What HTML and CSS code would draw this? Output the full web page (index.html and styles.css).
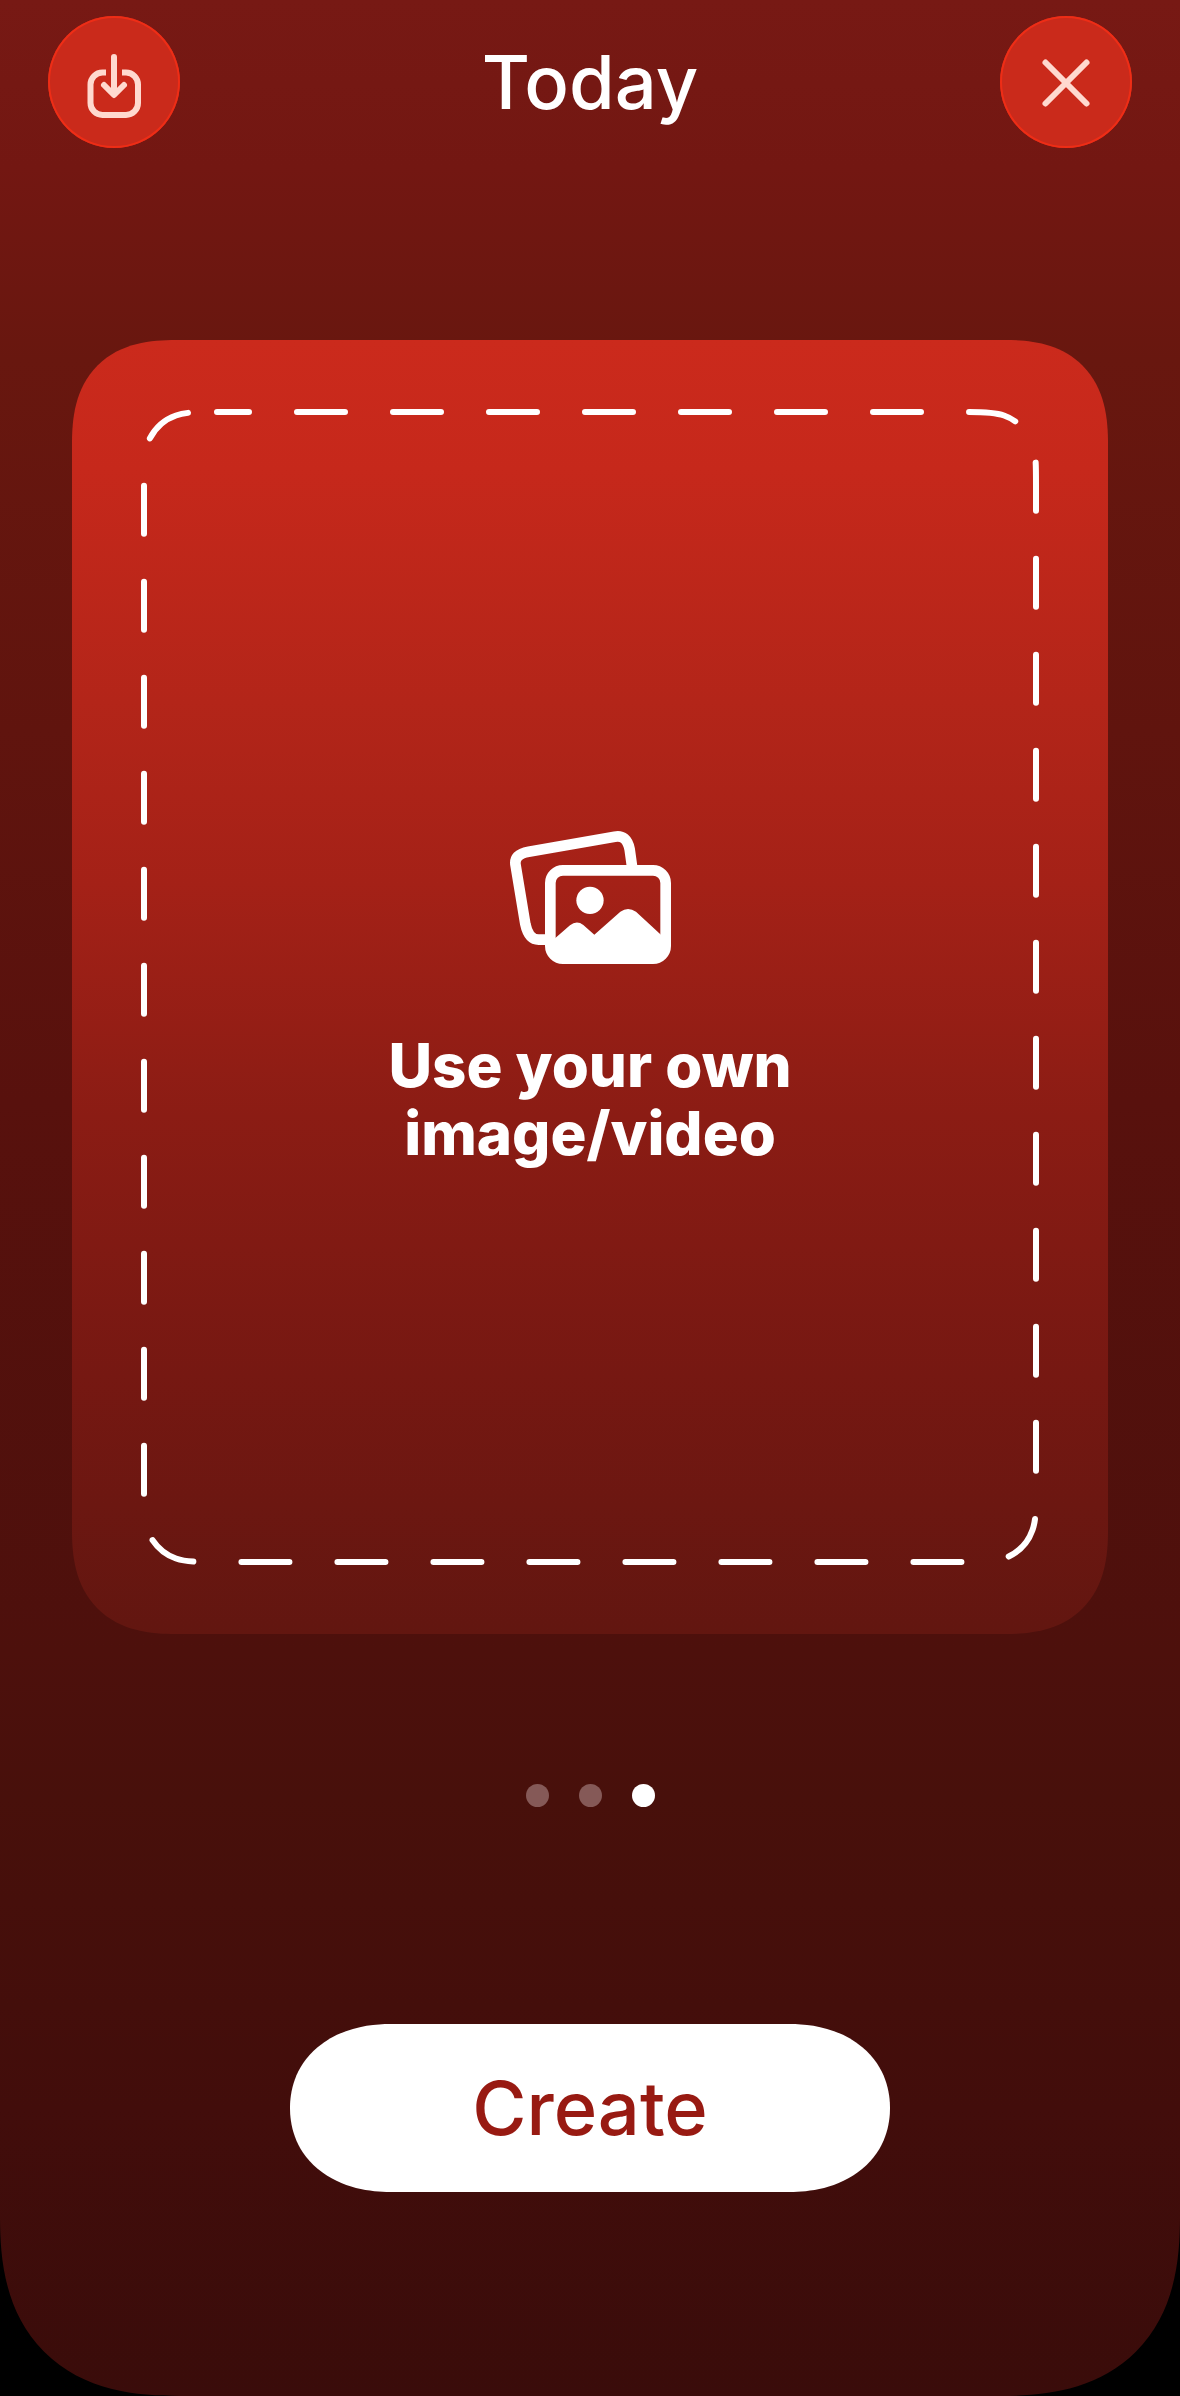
FILE: index.html
```html
<!DOCTYPE html>
<html lang="en">
<head>
    <meta charset="UTF-8">
    <meta name="viewport" content="width=device-width, initial-scale=1.0">
    <title>Today</title>
    <link rel="stylesheet" href="styles.css">
</head>
<body>
    <div class="screen">
        <header class="top-bar">
            <button type="button" class="round-btn" aria-label="Save">
                <svg viewBox="0 0 132 132" aria-hidden="true">
                    <path d="M58 56.5H54.5a12 12 0 0 0-12 12V87a12 12 0 0 0 12 12H78a12 12 0 0 0 12-12V68.5a12 12 0 0 0-12-12H74" stroke-linecap="butt"/>
                    <path d="M66 41V78M56 69L66 79L76 69"/>
                </svg>
            </button>
            <h1>Today</h1>
            <button type="button" class="round-btn" aria-label="Close">
                <svg viewBox="0 0 132 132" aria-hidden="true">
                    <path d="M45.5 46.5L86.5 87.5M86.5 46.5L45.5 87.5"/>
                </svg>
            </button>
        </header>

        <main>
            <button type="button" class="card">
                <svg class="dashes" viewBox="0 0 1036 1294" aria-hidden="true">
                    <path d="M145 72H891C911 72 922 72 932 75.5C945 80 956 91 960.5 104C964 114 964 125 964 145V1149C964 1169 964 1180 960.5 1190C956 1203 945 1214 932 1218.5C922 1222 911 1222 891 1222H145C125 1222 114 1222 104 1218.5C91 1214 80 1203 75.5 1190C72 1180 72 1169 72 1149V145C72 125 72 114 75.5 104C80 91 91 80 104 75.5C114 72 125 72 145 72"/>
                </svg>
                <svg class="photos" viewBox="0 0 483 399" aria-hidden="true">
                    <path class="line" d="M366 106L359 55Q350 10 314 17L56 62Q10 70 17 104L46 279Q56 326 86 326H108"/>
                    <rect class="line" x="121" y="118" width="346" height="265" rx="38"/>
                    <circle cx="240" cy="208" r="41"/>
                    <path d="M130 326L180 283Q200 267 220 282L253 311L331 242Q354 226 378 242L460 318V375L440 383H130Z"/>
                </svg>
                <span class="card-text">Use your own<br>image/video</span>
            </button>

            <nav class="dots" aria-label="Slides">
                <button type="button" aria-label="Slide 1"></button>
                <button type="button" aria-label="Slide 2"></button>
                <button type="button" class="active" aria-label="Slide 3"></button>
            </nav>

            <button type="button" class="create-btn">Create</button>
        </main>
    </div>
</body>
</html>
```

FILE: styles.css
```css
* {
    margin: 0;
    padding: 0;
    box-sizing: border-box;
}

body {
    background-color: #000;
    color: white;
    font-family: Inter, 'Liberation Sans', sans-serif;
}

button {
    border: none;
    background: none;
    color: inherit;
    font-family: inherit;
    cursor: pointer;
}

.screen {
    min-height: 100vh;
    padding-bottom: 204px;
    background: linear-gradient(#771914 0%, #731712 7%, #68170f 15%, #58110d 46%, #4d100c 69%, #48100b 75%, #420d0b 88%, #3a0c0a 100%);
    border-radius: 0 0 148px 148px;
}

.top-bar {
    display: flex;
    justify-content: space-between;
    align-items: center;
    padding: 16px 48px 0;
}

h1 {
    font-size: 74px;
    font-weight: 500;
    line-height: 80px;
}

.round-btn {
    width: 132px;
    height: 132px;
    border-radius: 50%;
    background-color: #ca2a1b;
    box-shadow: inset 0 0 0 2px #ee2d16;
}

.round-btn svg {
    display: block;
    fill: none;
    stroke: #ffd9cf;
    stroke-width: 6;
    stroke-linecap: round;
    stroke-linejoin: round;
}

main {
    display: flex;
    flex-direction: column;
    align-items: center;
    padding: 192px 72px 0;
}

.card {
    position: relative;
    display: flex;
    flex-direction: column;
    align-items: center;
    justify-content: center;
    gap: 67px;
    width: 100%;
    aspect-ratio: 1036 / 1294;
    padding-top: 24px;
    background: linear-gradient(#cb2a1c 0%, #c6281b 10%, #b32519 28%, #a42117 42%, #8b1c14 60%, #761812 80%, #621610 100%);
    border-radius: 86px;
}

/* dashed frame lies over the whole card */
.dashes {
    position: absolute;
    inset: 0;
    width: 100%;
    height: 100%;
    fill: none;
    stroke: white;
    stroke-width: 6;
    stroke-linecap: round;
    stroke-dasharray: 48;
    stroke-dashoffset: 16;
}

.photos {
    width: 161px;
    height: 133px;
    fill: white;
}

.photos .line {
    fill: none;
    stroke: white;
    stroke-width: 32;
}

.card-text {
    font-size: 60px;
    font-weight: 800;
    line-height: 68px;
}

.dots {
    display: flex;
    gap: 30px;
    margin-top: 150px;
}

.dots button {
    width: 23px;
    height: 23px;
    border-radius: 50%;
    background-color: #855957;
}

.dots .active {
    background-color: white;
}

.create-btn {
    width: 600px;
    max-width: 100%;
    height: 168px;
    margin-top: 217px;
    background-color: white;
    border-radius: 84px;
    color: #981a12;
    font-size: 74px;
    font-weight: 500;
}

/* smoother, continuous corners where the browser has them */
@supports (corner-shape: superellipse(1.3)) {
    .screen {
        border-radius: 0 0 180px 180px;
        corner-shape: superellipse(1.3);
    }

    .card {
        border-radius: 104px;
        corner-shape: superellipse(1.3);
    }

    .create-btn {
        border-radius: 100px / 84px;
        corner-shape: superellipse(1.1);
    }
}
```
